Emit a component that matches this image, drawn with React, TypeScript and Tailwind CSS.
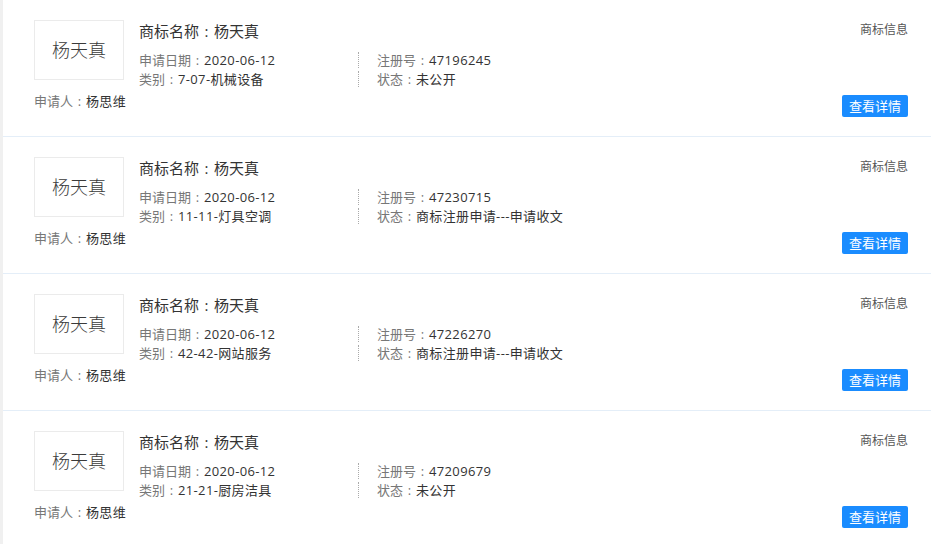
import React from 'react';

type Mark = {
  name: string;
  date: string;
  category: string;
  regNo: string;
  status: string;
  applicant: string;
};

const marks: Mark[] = [
  { name: '杨天真', date: '2020-06-12', category: '7-07-机械设备', regNo: '47196245', status: '未公开', applicant: '杨思维' },
  { name: '杨天真', date: '2020-06-12', category: '11-11-灯具空调', regNo: '47230715', status: '商标注册申请---申请收文', applicant: '杨思维' },
  { name: '杨天真', date: '2020-06-12', category: '42-42-网站服务', regNo: '47226270', status: '商标注册申请---申请收文', applicant: '杨思维' },
  { name: '杨天真', date: '2020-06-12', category: '21-21-厨房洁具', regNo: '47209679', status: '未公开', applicant: '杨思维' },
];

const font = { fontFamily: '"Open Sans", "Noto Sans CJK SC", sans-serif' };

// full-width colon drawn centred in a 1em box
const Colon = () => <span className="inline-block w-[1em] text-center">:</span>;

const Field: React.FC<{ label: string; value: string }> = ({ label, value }) => (
  <>
    <span className="text-[#777]">{label}<Colon /></span>
    <span className="text-[#333] tracking-[0.35px]">{value}</span>
  </>
);

const MarkRow: React.FC<{ mark: Mark }> = ({ mark }) => (
  <div className="h-[137px] border-b border-[#e4eef8] pl-[31px] pr-[23px] pt-[20px] flex">
    <div className="w-[90px] shrink-0 flex flex-col">
      <div className="h-[60px] w-[90px] border border-[#ebebeb] flex items-center justify-center text-[18px] text-[#3a3a3a] font-light">
        {mark.name}
      </div>
      <div className="mt-[12px] text-[13px] leading-[19px] whitespace-nowrap">
        <Field label="申请人" value={mark.applicant} />
      </div>
    </div>

    <div className="ml-[15px] flex-1 flex flex-col">
      <div className="text-[15px] leading-[20px] mt-[1px] text-[#333]">
        商标名称<Colon />{mark.name}
      </div>
      <div className="mt-[11px] grid grid-cols-[219px_1fr] gap-y-[3px] text-[13px]">
        <div className="h-[16px] leading-[16px]"><Field label="申请日期" value={mark.date} /></div>
        <div className="h-[16px] leading-[16px] border-l border-dotted border-[#aaa] pl-[18px]"><Field label="注册号" value={mark.regNo} /></div>
        <div className="h-[16px] leading-[16px]"><Field label="类别" value={mark.category} /></div>
        <div className="h-[16px] leading-[16px] border-l border-dotted border-[#aaa] pl-[18px]"><Field label="状态" value={mark.status} /></div>
      </div>
    </div>

    <div className="flex flex-col items-end pb-[19px]">
      <div className="text-[12px] leading-[18px] mt-[1px] text-[#555]">商标信息</div>
      <button className="mt-auto w-[66px] h-[22px] rounded-[2px] bg-[#1a8cff] text-white text-[13px] leading-[22px]">
        查看详情
      </button>
    </div>
  </div>
);

export default function App() {
  return (
    <div className="w-[931px] h-[544px] overflow-hidden bg-white border-l-[3px] border-[#f0f0f0]" style={font}>
      {marks.map((m, i) => (
        <MarkRow key={i} mark={m} />
      ))}
    </div>
  );
}
